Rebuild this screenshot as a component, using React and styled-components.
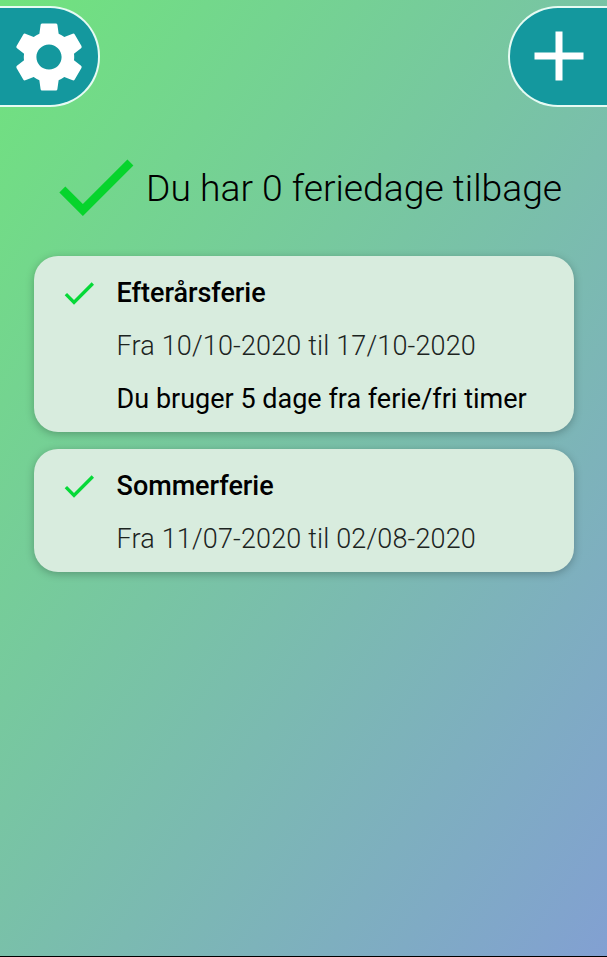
import React from 'react';
import styled, { createGlobalStyle } from 'styled-components';
import { MdSettings, MdAdd, MdCheck } from 'react-icons/md';

const GlobalStyle = createGlobalStyle`
  * {
    box-sizing: border-box;
  }

  body {
    margin: 0;
    overflow: hidden;
    font-family: Roboto, sans-serif;
    color: #000;
  }
`;

const Screen = styled.div`
  height: 957px;
  padding-top: 6px;
  display: flex;
  flex-direction: column;
  background: linear-gradient(125deg, #70e37d, #82a0d2);
  border-bottom: 1px solid #000;
`;

const TopBar = styled.header`
  display: flex;
  justify-content: space-between;
`;

const TabButton = styled.button`
  width: ${({ $side }) => ($side === 'left' ? '100px' : '99px')};
  height: 101px;
  padding: ${({ $side }) => ($side === 'left' ? '0 8px 0 7px' : '0 6px 1px 6px')};
  display: flex;
  align-items: center;
  justify-content: center;
  background-color: #14989e;
  color: white;
  border: 2px solid #e6fbf3;
  border-radius: ${({ $side }) => ($side === 'left' ? '0 50px 50px 0' : '50px 0 0 50px')};
  border-${({ $side }) => $side}: none;

  svg {
    flex-shrink: 0;
    width: 84px;
    height: 84px;
  }
`;

const Summary = styled.div`
  display: flex;
  align-items: center;
  height: 100px;
  margin: 29px 0 0 45px;

  svg {
    flex-shrink: 0;
    width: 101px;
    height: 101px;
    color: #06d42c;
  }
`;

const Heading = styled.h1`
  margin: 0;
  padding-top: 4px;
  font-size: 37.25px;
  font-weight: 300;
  line-height: 46px;
  white-space: nowrap;
`;

const List = styled.main`
  display: flex;
  flex-direction: column;
  gap: 17px;
  padding: 20px 33px 0 34px;
`;

const Card = styled.section`
  display: flex;
  padding: 11px 0 6px 25px;
  background-color: #d8ecde;
  border-radius: 24px;
  box-shadow: 0 2px 8px rgba(0, 0, 0, 0.25);

  svg {
    flex-shrink: 0;
    width: 40px;
    height: 40px;
    margin: 6px 17.6px 0 0;
    color: #06d938;
  }
`;

const Line = styled.p`
  margin: 0;
  font-size: 27px;
  font-weight: 400;
  line-height: 53px;
  white-space: nowrap;
`;

const Title = styled(Line)`
  font-weight: 500;
  letter-spacing: -0.05px;
`;

const Dates = styled(Line)`
  font-weight: 300;
  letter-spacing: 0.15px;
  color: #1c241f;
`;

const Holiday = ({ title, from, to, note }) => (
  <Card>
    <MdCheck />
    <div>
      <Title>{title}</Title>
      <Dates>Fra {from} til {to}</Dates>
      {note && <Line>{note}</Line>}
    </div>
  </Card>
);

const App = () => {
  return (
    <Screen>
      <GlobalStyle />
      <TopBar>
        <TabButton $side="left" aria-label="Indstillinger">
          <MdSettings />
        </TabButton>
        <TabButton $side="right" aria-label="Tilføj ferie">
          <MdAdd />
        </TabButton>
      </TopBar>
      <Summary>
        <MdCheck />
        <Heading>Du har 0 feriedage tilbage</Heading>
      </Summary>
      <List>
        <Holiday
          title="Efterårsferie"
          from="10/10-2020"
          to="17/10-2020"
          note="Du bruger 5 dage fra ferie/fri timer"
        />
        <Holiday title="Sommerferie" from="11/07-2020" to="02/08-2020" />
      </List>
    </Screen>
  );
};

export default App;
